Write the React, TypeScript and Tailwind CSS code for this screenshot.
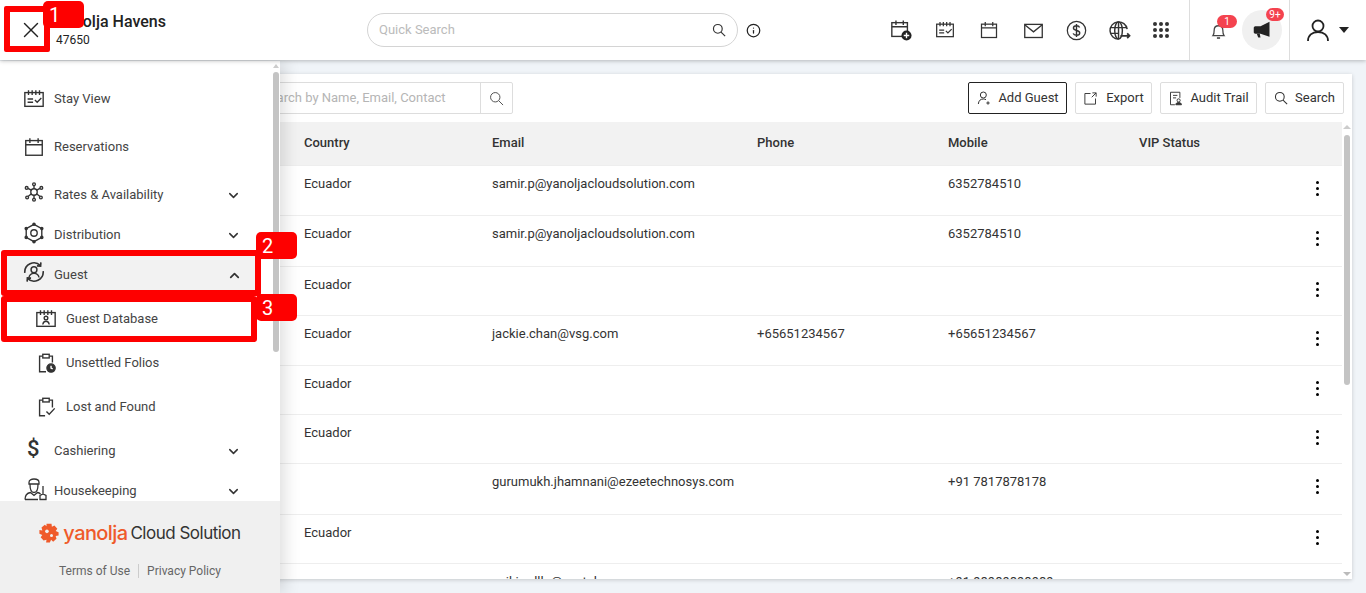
import React from "react"
import { ChevronDown, ChevronUp, Info, X } from "lucide-react"

const Svg = ({ size = 20, children }: { size?: number; children: React.ReactNode }) => (
  <svg width={size} height={size} viewBox="0 0 24 24" fill="none" stroke="#333" strokeWidth="1.5">
    {children}
  </svg>
)

const SearchIcon = ({ size = 14, color = "#333", sw = 2 }: { size?: number; color?: string; sw?: number }) => (
  <svg width={size} height={size} viewBox="0 0 24 24" fill="none" stroke={color} strokeWidth={sw}>
    <circle cx="10" cy="10" r="7.5" />
    <path d="m15.5 15.5 7 7" />
  </svg>
)

const CalendarIcon = ({ size = 22 }: { size?: number }) => (
  <Svg size={size}>
    <rect x="3" y="5" width="18" height="16" />
    <path d="M3 9.5h18M7.5 2.5v5M16.5 2.5v5" />
  </Svg>
)

const StayIcon = ({ size = 22 }: { size?: number }) => (
  <Svg size={size}>
    <rect x="2" y="5" width="20" height="15" />
    <path d="M6 2.5v5M10 2.5v5M14 2.5v5M18 2.5v5M5 12h6M5 15.5h6M13 13l2.5 2.5L20 11" />
  </Svg>
)

const AddCalendarIcon = () => (
  <svg width="22" height="22" viewBox="0 0 24 24" fill="none" stroke="#333" strokeWidth="1.5">
    <rect x="2" y="4" width="17" height="15" />
    <path d="M2 8.5h17M6.5 1.5v5M14.5 1.5v5" />
    <circle cx="18" cy="18" r="5.5" fill="#222" stroke="none" />
    <path d="M18 15v6M15 18h6" stroke="#fff" />
  </svg>
)

const RatesIcon = () => (
  <Svg size={22}>
    <circle cx="12" cy="12" r="3.5" />
    <path d="M12 8.5V5M9 10 5.5 8M15 10l3.5-2M9.2 14l-3.7 3M14.8 14l3.7 3M12 15.5V19" />
    <circle cx="12" cy="3.5" r="1.5" />
    <circle cx="4" cy="7.5" r="1.5" />
    <circle cx="20" cy="7.5" r="1.5" />
    <circle cx="4.5" cy="18" r="1.5" />
    <circle cx="19.5" cy="18" r="1.5" />
    <circle cx="12" cy="20.5" r="1.5" />
  </Svg>
)

const DistributionIcon = () => (
  <Svg size={22}>
    <path d="M12 2.5 20.5 7.2v9.6L12 21.5l-8.5-4.7V7.2z" />
    <circle cx="12" cy="12" r="3.5" />
    <circle cx="12" cy="2.5" r="1.2" fill="#333" />
    <circle cx="20.5" cy="7.2" r="1.2" fill="#333" />
    <circle cx="20.5" cy="16.8" r="1.2" fill="#333" />
    <circle cx="12" cy="21.5" r="1.2" fill="#333" />
    <circle cx="3.5" cy="16.8" r="1.2" fill="#333" />
    <circle cx="3.5" cy="7.2" r="1.2" fill="#333" />
  </Svg>
)

const GuestIcon = () => (
  <Svg size={22}>
    <path d="M2 13A10 10 0 0 1 19 5M22 11A10 10 0 0 1 5 19" strokeWidth="1.8" />
    <path d="m19.5 1.5-.3 4-4-.2M4.5 22.5l.3-4 4 .2" strokeWidth="1.8" />
    <circle cx="12" cy="9.5" r="3.2" strokeWidth="1.6" />
    <path d="M6.5 18c.5-3 2.800-4.500 5.500-4.500s5 1.500 5.500 4.500" strokeWidth="1.6" />
  </Svg>
)

const GuestDbIcon = () => (
  <Svg size={22}>
    <rect x="2" y="5" width="20" height="15" />
    <path d="M6 2.500v5M18 2.500v5M10 2.500v5M14 2.500v5" />
    <circle cx="12" cy="11" r="2" />
    <path d="M8.500 18c.3-2.500 1.600-3.500 3.500-3.500s3.200 1 3.500 3.500" />
  </Svg>
)

const FolioIcon = () => (
  <Svg size={22}>
    <path d="M8 4.500H5v17h7M16 4.500h3v7" />
    <rect x="8.500" y="2.500" width="7" height="4" />
    <circle cx="17.500" cy="17.500" r="4.500" fill="#333" />
    <path d="M17.500 15v2.500l1.800 1" stroke="#fff" />
  </Svg>
)

const LostIcon = () => (
  <Svg size={22}>
    <path d="M8 4.500H5v17h6M16 4.500h3v8" />
    <rect x="8.500" y="2.500" width="7" height="4" />
    <path d="m12.500 17 3 3 6-6.500" />
  </Svg>
)

const HousekeepingIcon = () => (
  <Svg size={24}>
    <path d="M6 5.500c0-2.500 2.500-3.500 5-3.500s5 1 5 3.500v1.500H6zM7 7.500c0 6.500 1.500 8 4 8s4-1.500 4-8" strokeWidth="1.300" />
    <path d="M2 22.500c0-4 2.500-6.500 5.500-7l3.500 3 3.500-3c1.200.2 2.200.7 3 1.500" strokeWidth="1.300" />
    <path d="M2 22.500h13M20 9v8M17 22.500v-4l3-1.500 3 1.500v4z" strokeWidth="1.300" />
  </Svg>
)

const MailIcon = () => (
  <Svg size={21}>
    <rect x="2" y="5" width="20" height="15" />
    <path d="m2 5.500 10 8 10-8" />
  </Svg>
)

const MoneyIcon = () => (
  <svg width="21" height="21" viewBox="0 0 24 24" fill="none" stroke="#333" strokeWidth="1.400">
    <circle cx="12" cy="12" r="10.500" />
    <path d="M15.500 8.500C15 7 13.500 6.500 12 6.500c-2 0-3.500 1-3.500 2.700 0 3.800 7.200 1.800 7.200 5.600 0 1.700-1.600 2.700-3.700 2.700-1.700 0-3.300-.7-3.800-2.200M12 4.500v15" strokeWidth="1.600" />
  </svg>
)

const GlobeIcon = () => (
  <Svg size={23}>
    <path d="M20 10.500A9 9 0 1 0 11 21" />
    <ellipse cx="11" cy="12" rx="4" ry="9" />
    <path d="M2.500 9h17M2.500 15h9M11 3v18" />
    <path d="M13 17.500h9.500M20 15l2.500 2.500L20 20" strokeWidth="1.800" />
  </Svg>
)

const GridIcon = () => (
  <div className="grid grid-cols-3 gap-[2px]">
    {[1, 2, 3, 4, 5, 6, 7, 8, 9].map((n) => (
      <span key={n} className="h-[4px] w-[4px] rounded-full bg-[#333]" />
    ))}
  </div>
)

const BellIcon = () => (
  <svg width="19" height="19" viewBox="0 0 24 24" fill="none" stroke="#444" strokeWidth="1.600">
    <path d="M5 18.500c1.300-1.500 1.500-3 1.500-6.500 0-3.500 2-6 5.500-6s5.500 2.500 5.500 6c0 3.500.2 5 1.500 6.500z" />
    <path d="M10 21.500h4" strokeWidth="2" />
  </svg>
)

const MegaphoneIcon = () => (
  <svg width="18" height="18" viewBox="0 0 24 24" fill="#222">
    <path d="M22 1v20L10 17H3c-1 0-2-1-2-2V9c0-1 1-2 2-2h7z" />
    <path d="M5 17h4l1 5H7z" />
  </svg>
)

const UserIcon = () => (
  <svg width="24" height="24" viewBox="0 0 24 24" fill="none" stroke="#222" strokeWidth="1.800">
    <circle cx="12" cy="8" r="5.500" />
    <path d="M2 23c0-5.500 4-9 10-9s10 3.500 10 9" />
  </svg>
)

const AddGuestIcon = () => (
  <Svg size={16}>
    <circle cx="11" cy="7.500" r="4.500" />
    <path d="M3.500 21c.5-5 3-7.500 7.500-7.500 1.500 0 3 .4 4 1M18 17v5M15.500 19.500h5" />
  </Svg>
)

const ExportIcon = () => (
  <Svg size={15}>
    <path d="M12 4H3v17h17v-9" />
    <path d="M15 3h6v6M21 3l-7 7" />
  </Svg>
)

const AuditIcon = () => (
  <Svg size={15}>
    <path d="M19 11V2H4v20h7M8 7h7M8 11h5" />
    <circle cx="17" cy="15" r="2.500" />
    <path d="M12.500 22c0-2.500 2-3.500 4.500-3.500s4.500 1 4.500 3.500z" fill="#333" />
  </Svg>
)

const LogoMark = () => (
  <svg width="20" height="20" viewBox="0 0 24 24" fill="#ef5a2a">
    <path d="M9 1h6l.5 3.500 3-1.500 3.500 4-2 2.500L23.500 11v4l-3.500.5 1 3.500-4 3.500-2.500-2.500L13 23.500H8.500L9 20l-3.500 1L2 17l2-2.500L.5 13V8.500L4 9 3 5.500 7 2l2 2z" />
    <circle cx="9.500" cy="10" r="2.200" fill="#f0f0f0" />
    <circle cx="15" cy="15" r="1.800" fill="#f0f0f0" />
  </svg>
)

const navTop = [
  { label: "Stay View", icon: <StayIcon />, cls: "h-[48px]", iconCls: "" },
  { label: "Reservations", icon: <CalendarIcon />, cls: "h-[48px]", iconCls: "" },
  { label: "Rates & Availability", icon: <RatesIcon />, cls: "mt-[4px] h-[40px]", iconCls: "pb-[6px]", arrow: true },
  { label: "Distribution", icon: <DistributionIcon />, cls: "h-[40px]", iconCls: "pb-[4px]", arrow: true },
]

const navSub = [
  { label: "Guest Database", icon: <GuestDbIcon /> },
  { label: "Unsettled Folios", icon: <FolioIcon /> },
  { label: "Lost and Found", icon: <LostIcon /> },
]

const rows = [
  { h: "h-[50px]", country: "Ecuador", email: "samir.p@yanoljacloudsolution.com", phone: "", mobile: "6352784510" },
  { h: "h-[51px]", country: "Ecuador", email: "samir.p@yanoljacloudsolution.com", phone: "", mobile: "6352784510" },
  { h: "h-[49px]", country: "Ecuador", email: "", phone: "", mobile: "" },
  { h: "h-[50px]", country: "Ecuador", email: "jackie.chan@vsg.com", phone: "+65651234567", mobile: "+65651234567" },
  { h: "h-[49px]", country: "Ecuador", email: "", phone: "", mobile: "" },
  { h: "h-[49px]", country: "Ecuador", email: "", phone: "", mobile: "" },
  { h: "h-[51px]", country: "", email: "gurumukh.jhamnani@ezeetechnosys.com", phone: "", mobile: "+91 7817878178" },
  { h: "h-[49px]", country: "Ecuador", email: "", phone: "", mobile: "" },
  { h: "h-[50px]", country: "", email: "saikiradlla@yantel.com", phone: "", mobile: "+91 98989898989" },
]

const gridCols = "grid grid-cols-[282px_188px_265px_191px_191px_1fr]"

const ToolButton = ({ icon, label, cls }: { icon: React.ReactNode; label: string; cls: string }) => (
  <button className={`flex h-[32px] items-center rounded-[2px] border bg-white text-[13px] text-[#333] ${cls}`}>
    {icon}
    {label}
  </button>
)

const Marker = ({ n, cls }: { n: number; cls: string }) => (
  <div className={`absolute z-50 flex h-[27px] w-[41px] items-center rounded-[5px] bg-[#fe0000] pl-[6px] text-[20px] text-white ${cls}`}>
    {n}
  </div>
)

const App = () => {
  return (
    <div className="relative flex h-[593px] w-[1366px] flex-col overflow-hidden bg-[#f0f4f8] font-['Roboto',sans-serif]">
      {/* top bar */}
      <header className="relative z-30 flex h-[60px] shrink-0 items-center bg-white shadow-[0_1px_4px_rgba(0,0,0,0.25)]">
        <div className="flex w-[367px] shrink-0 items-center">
          <div className="flex w-[56px] justify-center pl-[6px]">
            <X size={26} strokeWidth={1.3} color="#222" />
          </div>
          <div className="flex flex-col">
            <span className="-mt-[2px] text-[16px] leading-[20px] font-medium text-[#222]">Yanolja Havens</span>
            <span className="mt-[1px] text-[12px] leading-[14px] text-[#222]">47650</span>
          </div>
        </div>
        <div className="flex h-[34px] w-[371px] items-center justify-between rounded-full border border-[#d4d4d4] pr-[11px] pl-[11px]">
          <span className="text-[13px] text-[#bbb]">Quick Search</span>
          <SearchIcon />
        </div>
        <div className="ml-[8px]">
          <Info size={15} color="#222" />
        </div>
        <div className="ml-[118px] flex items-center">
          <div className="flex w-[44px] justify-center"><AddCalendarIcon /></div>
          <div className="flex w-[44px] justify-center"><StayIcon size={20} /></div>
          <div className="flex w-[44px] justify-center"><CalendarIcon size={20} /></div>
          <div className="flex w-[44px] justify-center"><MailIcon /></div>
          <div className="flex w-[43px] justify-center"><MoneyIcon /></div>
          <div className="flex w-[43px] justify-center"><GlobeIcon /></div>
          <div className="flex w-[39px] justify-center"><GridIcon /></div>
        </div>
        <div className="ml-[9px] flex h-[60px] w-[101px] items-center border-x border-[#ddd]">
          <div className="relative ml-[19px]">
            <BellIcon />
            <span className="absolute -top-[6px] left-[8px] flex h-[13px] w-[20px] items-center justify-center rounded-full bg-[#f4434f] text-[10px] text-white">1</span>
          </div>
          <div className="relative ml-[14px] flex h-[40px] w-[40px] items-center justify-center rounded-full bg-[#f0f0f0]">
            <MegaphoneIcon />
            <span className="absolute -top-[2px] left-[24px] flex h-[13px] w-[18px] items-center justify-center rounded-full bg-[#f4434f] text-[10px] text-white">9+</span>
          </div>
        </div>
        <div className="ml-[16px]"><UserIcon /></div>
        <div className="ml-[9px] h-0 w-0 border-x-[5px] border-t-[6px] border-x-transparent border-t-[#222]" />
      </header>

      {/* page body */}
      <main className="flex min-h-0 flex-1 flex-col pt-[14px] pr-[14px] pb-[14px] pl-[14px]">
        <div className="flex min-h-0 flex-1 flex-col overflow-hidden bg-white shadow-[0_1px_4px_rgba(0,0,0,0.18)]">
          <div className="flex h-[48px] shrink-0 items-center justify-between pr-[8px] pl-[228px]">
            <div className="flex h-[32px] w-[271px] items-center rounded-[2px] border border-[#ddd]">
              <span className="flex-1 pl-[19px] text-[13px] text-[#b5b5b5]">Search by Name, Email, Contact</span>
              <div className="flex h-full w-[32px] items-center justify-center border-l border-[#ddd]">
                <SearchIcon size={15} color="#555" sw={1.6} />
              </div>
            </div>
            <div className="flex gap-[8px]">
              <ToolButton icon={<span className="mr-[6px]"><AddGuestIcon /></span>} label="Add Guest" cls="w-[99px] justify-center border-[#222]" />
              <ToolButton icon={<span className="mr-[8px]"><ExportIcon /></span>} label="Export" cls="w-[77px] justify-center border-[#ddd]" />
              <ToolButton icon={<span className="mr-[7px]"><AuditIcon /></span>} label="Audit Trail" cls="w-[97px] justify-center border-[#ddd]" />
              <ToolButton icon={<span className="mr-[7px]"><SearchIcon size={14} sw={1.8} /></span>} label="Search" cls="w-[79px] justify-center border-[#ddd]" />
            </div>
          </div>
          <div className="flex min-h-0 flex-1 pl-[8px]">
            <div className="min-h-0 flex-1 overflow-hidden">
              <div className={`${gridCols} h-[43px] items-center bg-[#f2f2f2] pb-[2px] text-[13px] font-medium text-[#333]`}>
                <span />
                <span>Country</span>
                <span>Email</span>
                <span>Phone</span>
                <span>Mobile</span>
                <span>VIP Status</span>
              </div>
              {rows.map((row, i) => (
                <div key={i} className={`${gridCols} ${row.h} border-t border-[#eee] pt-[10px] text-[13px] leading-[16px] text-[#333]`}>
                  <span />
                  <span>{row.country}</span>
                  <span>{row.email}</span>
                  <span>{row.phone}</span>
                  <span>{row.mobile}</span>
                  <div className="flex justify-end pt-[5px] pr-[23px]">
                    <div className="flex flex-col gap-[3px]">
                      <span className="h-[3px] w-[3px] rounded-full bg-black" />
                      <span className="h-[3px] w-[3px] rounded-full bg-black" />
                      <span className="h-[3px] w-[3px] rounded-full bg-black" />
                    </div>
                  </div>
                </div>
              ))}
            </div>
            <div className="flex w-[10px] shrink-0 flex-col items-center pt-[3px] pb-[3px]">
              <div className="h-0 w-0 border-x-[4px] border-b-[4px] border-x-transparent border-b-[#ccc]" />
              <div className="mt-[6px] h-[250px] w-[6px] rounded-full bg-[#c4c4c4]" />
              <div className="flex-1" />
              <div className="h-0 w-0 border-x-[4px] border-t-[4px] border-x-transparent border-t-[#bbb]" />
            </div>
          </div>
        </div>
      </main>

      {/* slide-out menu */}
      <aside className="absolute top-[61px] bottom-0 left-0 z-20 flex w-[280px] flex-col bg-white shadow-[4px_0_16px_rgba(0,0,0,0.14)]">
        <div className="flex min-h-0 flex-1">
          <nav className="min-w-0 flex-1 overflow-hidden pt-[14px] text-[13px] text-[#444]">
            {navTop.map((item) => (
              <div key={item.label} className={`flex items-center pr-[31px] pl-[23px] ${item.cls}`}>
                <span className={`flex w-[31px] shrink-0 ${item.iconCls}`}>{item.icon}</span>
                <span className="flex-1">{item.label}</span>
                {item.arrow && <ChevronDown size={15} strokeWidth={2.4} color="#333" />}
              </div>
            ))}
            <div className="mt-[1px] ml-[7px] flex h-[36px] w-[249px] items-center bg-[#f2f2f2] pt-[2px] pr-[14px] pl-[16px]">
              <span className="flex w-[31px] shrink-0 pb-[6px]"><GuestIcon /></span>
              <span className="flex-1">Guest</span>
              <ChevronUp size={15} strokeWidth={2.8} color="#333" />
            </div>
            <div className="mt-[5px]">
              {navSub.map((item) => (
                <div key={item.label} className="flex h-[44px] items-center pl-[35px]">
                  <span className="flex w-[31px] shrink-0">{item.icon}</span>
                  <span>{item.label}</span>
                </div>
              ))}
            </div>
            <div className="mt-[2px] flex h-[40px] items-center pr-[31px] pl-[23px]">
              <span className="flex w-[31px] shrink-0 pb-[4px] pl-[4px] text-[22px] leading-none font-medium text-[#333]">$</span>
              <span className="flex-1">Cashiering</span>
              <ChevronDown size={15} strokeWidth={2.4} color="#333" />
            </div>
            <div className="flex h-[40px] items-center pr-[31px] pl-[23px]">
              <span className="flex w-[31px] shrink-0 pb-[5px]"><HousekeepingIcon /></span>
              <span className="flex-1">Housekeeping</span>
              <ChevronDown size={15} strokeWidth={2.4} color="#333" />
            </div>
          </nav>
          <div className="flex w-[8px] shrink-0 flex-col items-center pt-[3px]">
            <div className="h-0 w-0 border-x-[3px] border-b-[4px] border-x-transparent border-b-[#ccc]" />
            <div className="mt-[4px] h-[280px] w-[6px] rounded-full bg-[#c4c4c4]" />
          </div>
        </div>
        <div className="flex h-[92px] shrink-0 flex-col items-center bg-[#f0f0f0] pt-[22px]">
          <div className="flex h-[20px] items-center">
            <LogoMark />
            <span className="ml-[4px] font-['Inter',sans-serif] text-[20px] leading-none font-medium tracking-[-0.6px] text-[#ef5a2a]">yanolja</span>
            <span className="ml-[3px] font-['Inter',sans-serif] text-[17px] leading-none tracking-[-0.5px] text-[#333]">Cloud Solution</span>
          </div>
          <div className="mt-[21px] flex items-center text-[12px] leading-[14px] text-[#666]">
            <span className="border-r border-[#ccc] pr-[8px]">Terms of Use</span>
            <span className="pl-[8px]">Privacy Policy</span>
          </div>
        </div>
      </aside>

      {/* red tutorial markers */}
      <div className="absolute top-[6px] left-[4px] z-40 h-[46px] w-[46px] rounded-[2px] border-[6px] border-[#fe0000]" />
      <Marker n={1} cls="top-[1px] left-[43px]" />
      <div className="absolute top-[250px] left-[1px] z-40 h-[46px] w-[260px] rounded-[3px] border-[6px] border-[#fe0000]" />
      <Marker n={2} cls="top-[232px] left-[256px]" />
      <div className="absolute top-[296px] left-[1px] z-40 h-[46px] w-[256px] rounded-[3px] border-[6px] border-[#fe0000]" />
      <Marker n={3} cls="top-[294px] left-[256px]" />
    </div>
  )
}

export default App
